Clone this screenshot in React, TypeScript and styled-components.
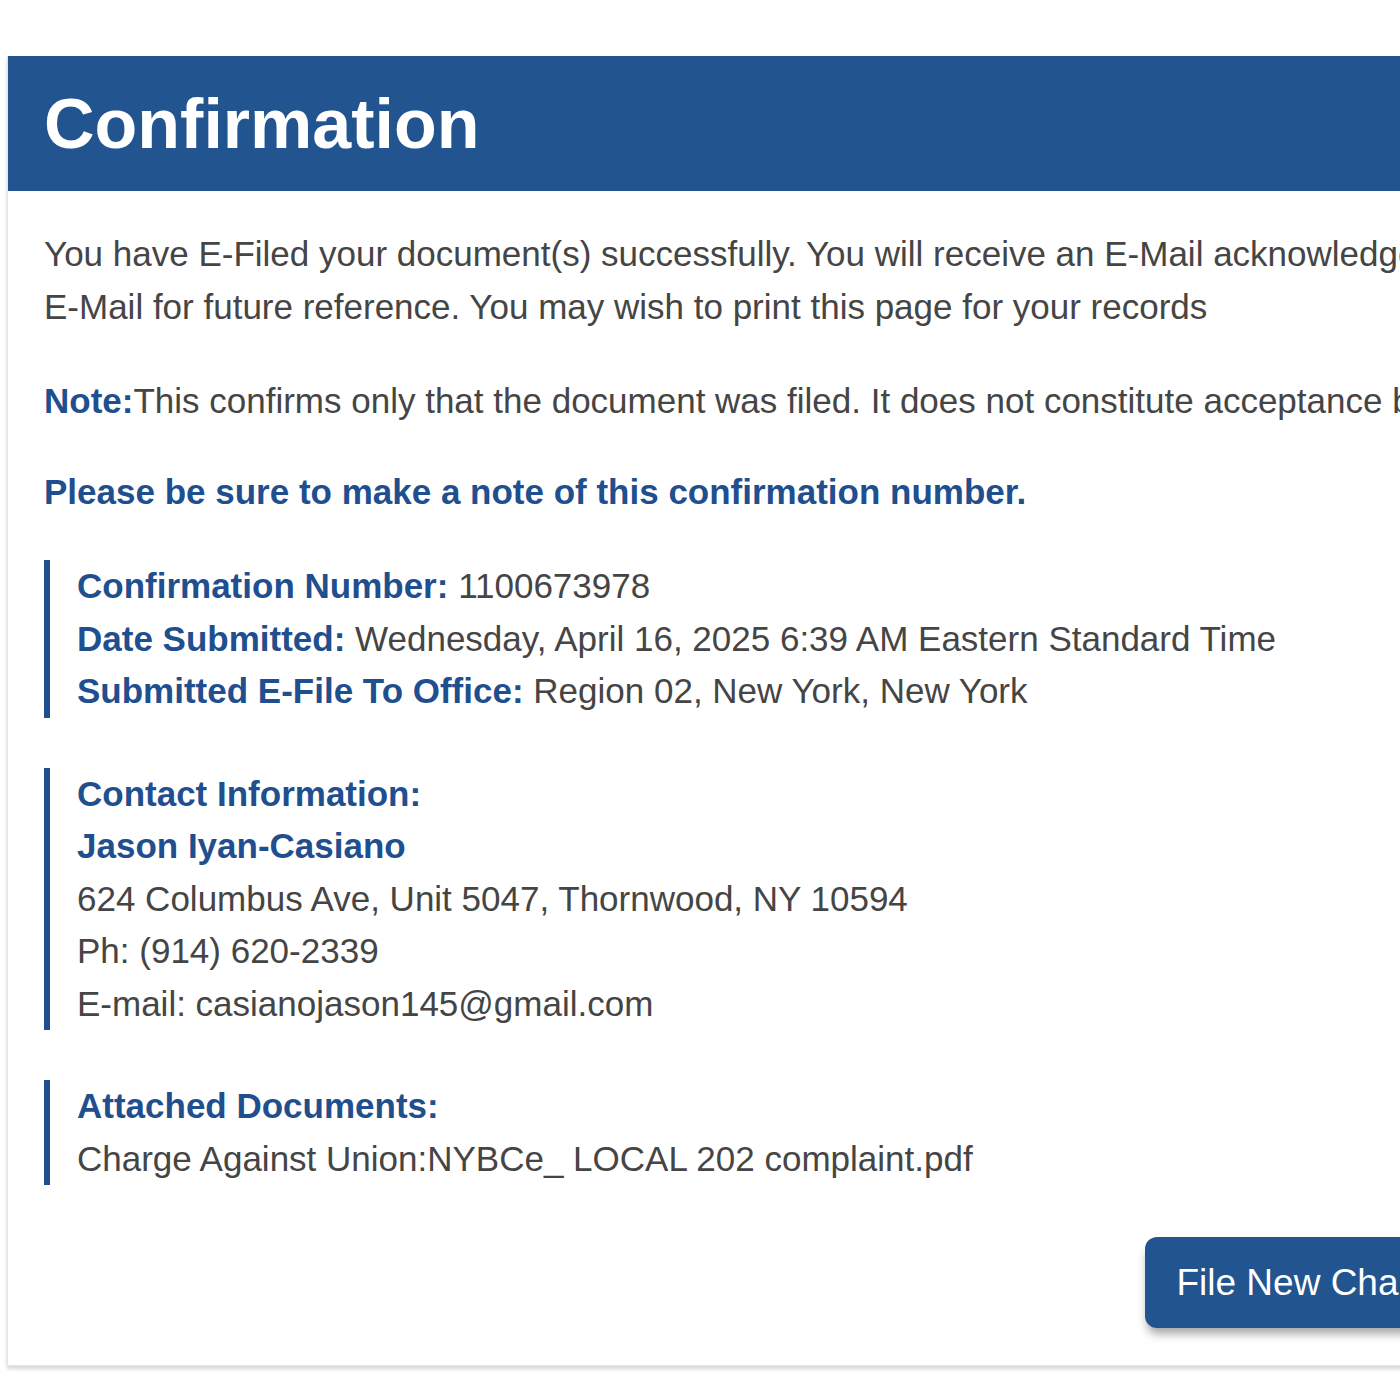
import styled, { createGlobalStyle } from 'styled-components';

const GlobalStyle = createGlobalStyle`
  html, body {
    margin: 0;
    padding: 0;
    background: #fff;
    overflow: hidden;
  }
  body {
    font-family: "Liberation Sans", Arial, Helvetica, sans-serif;
  }
`;

const Page = styled.div`
  padding: 56px 0 40px 7px;
  width: 1600px;
`;

const Card = styled.section`
  width: 1512px;
  background: #fff;
  border: 1px solid #e4e4e4;
  border-top: none;
  box-shadow: 0 3px 4px rgba(0, 0, 0, 0.16);
`;

const Header = styled.header`
  height: 135px;
  display: flex;
  align-items: center;
  padding: 0 36px;
  background: #22548f;
`;

const Title = styled.h1`
  margin: 0;
  color: #fff;
  font-size: 70px;
  font-weight: 700;
  line-height: 1;
`;

const Body = styled.div`
  padding: 37px 38px 37px 36px;
  color: #454545;
  font-size: 35px;
  line-height: 52.5px;
`;

const Paragraph = styled.p<{ $gap?: number }>`
  margin: 0 0 ${p => p.$gap ?? 40}px;
  white-space: nowrap;
`;

const Strong = styled.span`
  color: #1f4f8e;
  font-weight: 700;
`;

const Highlight = styled.p`
  margin: 0 0 42px;
  color: #1f4f8e;
  font-weight: 700;
  white-space: nowrap;
`;

const Block = styled.div`
  display: flex;
  flex-direction: column;
  margin: 0 0 50px 0;
  padding-left: 27px;
  border-left: 6px solid #1f4f8e;
  white-space: nowrap;
`;

const Line = styled.div``;

const Actions = styled.div`
  display: flex;
  justify-content: flex-end;
  padding-top: 2px;
`;

const Button = styled.button`
  height: 91px;
  padding: 0 30px 0 31px;
  border: none;
  border-radius: 12px;
  background: #22548f;
  color: #fff;
  font-family: inherit;
  font-size: 37px;
  box-shadow: 0 8px 10px -2px rgba(0, 0, 0, 0.35);
  cursor: pointer;
`;

type Field = { label: string; value: string };

const summary: Field[] = [
  { label: 'Confirmation Number:', value: '1100673978' },
  { label: 'Date Submitted:', value: 'Wednesday, April 16, 2025 6:39 AM Eastern Standard Time' },
  { label: 'Submitted E-File To Office:', value: 'Region 02, New York, New York' },
];

const contact = [
  '624 Columbus Ave, Unit 5047, Thornwood, NY 10594',
  'Ph: (914) 620-2339',
  'E-mail: casianojason145@gmail.com',
];

export default function App() {
  return (
    <>
      <GlobalStyle />
      <Page>
        <Card>
          <Header>
            <Title>Confirmation</Title>
          </Header>
          <Body>
            <Paragraph $gap={42}>
              You have E-Filed your document(s) successfully. You will receive an E-Mail acknowledgement. Please retain this
              <br />
              E-Mail for future reference. You may wish to print this page for your records
            </Paragraph>
            <Paragraph $gap={38}>
              <Strong>Note:</Strong>This confirms only that the document was filed. It does not constitute acceptance by the agency.
            </Paragraph>
            <Highlight>Please be sure to make a note of this confirmation number.</Highlight>

            <Block>
              {summary.map(f => (
                <Line key={f.label}>
                  <Strong>{f.label}</Strong> {f.value}
                </Line>
              ))}
            </Block>

            <Block>
              <Line><Strong>Contact Information:</Strong></Line>
              <Line><Strong>Jason Iyan-Casiano</Strong></Line>
              {contact.map(c => <Line key={c}>{c}</Line>)}
            </Block>

            <Block>
              <Line><Strong>Attached Documents:</Strong></Line>
              <Line>Charge Against Union:NYBCe_ LOCAL 202 complaint.pdf</Line>
            </Block>

            <Actions>
              <Button>File New Charge</Button>
            </Actions>
          </Body>
        </Card>
      </Page>
    </>
  );
}
